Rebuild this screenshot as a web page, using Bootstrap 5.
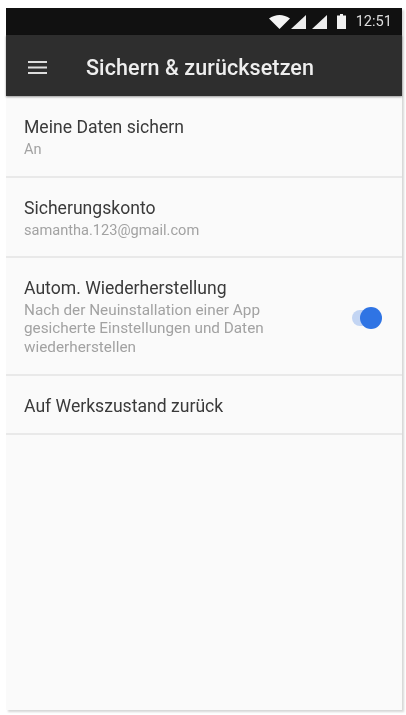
<!DOCTYPE html>
<html lang="de">
<head>
<meta charset="utf-8">
<title>Sichern &amp; zurücksetzen</title>
<link href="https://cdn.jsdelivr.net/npm/bootstrap@5.3.0/dist/css/bootstrap.min.css" rel="stylesheet">
<style>
html,body{height:715px;overflow:hidden;background:#fff;font-family:Roboto,"Liberation Sans",sans-serif}
.phone-screen{margin:8px 4px 0 6px;height:702px;background:#fafafa;box-shadow:2px 2px 2px rgba(0,0,0,.16);filter:blur(.7px)}
.status-strip{height:27px;background:#111;color:#ddd;font-size:14.6px;padding-right:10px}
.status-strip svg{flex:none}
.icon-wifi{margin-right:1px}
.icon-sig2{margin-left:6px}
.icon-batt{margin-left:10px}
.status-time{margin-left:10px}
.app-strip{height:61px;background:#2e2e2e;color:#eee;box-shadow:0 1px 2px rgba(0,0,0,.4);padding:4px 0 0 22px}
.app-title{font-size:21.5px;font-weight:500;margin:0 0 0 39px;letter-spacing:.1px}
.pref-list{--bs-list-group-bg:transparent;--bs-list-group-border-color:#e9e9e9}
.pref-row{padding:0 18px;display:flex;align-items:center;justify-content:space-between;color:#3a3a3a}
.pref-list.pref-list>.pref-row{border-width:0 0 2px;border-style:solid}
.row-a{height:82px;padding-top:3px}
.row-b{height:80px;padding-top:3px}
.row-c{height:118px;padding-top:1px}
.row-d{height:59px;padding-top:3px}
.pref-title{font-size:17.6px;line-height:22px}
.pref-sub{font-size:14.6px;line-height:19px;color:#a2a2a2;margin-top:2px}
.pref-sub-wrap{font-size:15.300px;max-width:270px;line-height:18.500px;margin-top:2px}
.toggle-track{width:28px;height:16px;border-radius:8px;background:#c3d5f3;margin:2px 4px 0 0;flex:none}
.toggle-knob{width:22px;height:22px;border-radius:50%;background:#2f74e4;right:-2px;top:-3px}
</style>
</head>
<body>
<div class="phone-screen d-flex flex-column">
  <div class="status-strip d-flex align-items-center justify-content-end">
    <svg class="icon-wifi" width="21" height="14" viewBox="0 0 21 14" aria-hidden="true"><path d="M0 3.500C3 1.200 7 0 10.500 0S18 1.200 21 3.500L10.500 14z" fill="#f4f4f4"/></svg>
    <svg width="15" height="14" viewBox="0 0 15 14" aria-hidden="true"><path d="M0 14L15 0v14z" fill="#eee"/></svg>
    <svg class="icon-sig2" width="15" height="14" viewBox="0 0 15 14" aria-hidden="true"><path d="M0 14L15 0v14z" fill="#eee"/></svg>
    <svg class="icon-batt" width="9" height="15" viewBox="0 0 9 15" aria-hidden="true"><path d="M3 0h3v1.500h3V15H0V1.500h3z" fill="#f2f2f2"/></svg>
    <span class="status-time">12:51</span>
  </div>
  <nav class="app-strip d-flex align-items-center">
    <svg width="19" height="13" viewBox="0 0 19 13" aria-hidden="true"><path d="M0 0h19v2H0zM0 5.500h19v2H0zM0 11h19v2H0z" fill="#ddd"/></svg>
    <h1 class="app-title">Sichern &amp; zurücksetzen</h1>
  </nav>
  <div class="list-group list-group-flush pref-list">
    <div class="list-group-item pref-row row-a">
      <div><div class="pref-title">Meine Daten sichern</div><div class="pref-sub">An</div></div>
    </div>
    <div class="list-group-item pref-row row-b">
      <div><div class="pref-title">Sicherungskonto</div><div class="pref-sub">samantha.123@gmail.com</div></div>
    </div>
    <div class="list-group-item pref-row row-c">
      <div><div class="pref-title">Autom. Wiederherstellung</div><div class="pref-sub pref-sub-wrap">Nach der Neuinstallation einer App gesicherte Einstellungen und Daten wiederherstellen</div></div>
      <div class="toggle-track position-relative"><div class="toggle-knob position-absolute"></div></div>
    </div>
    <div class="list-group-item pref-row row-d">
      <div class="pref-title">Auf Werkszustand zurück</div>
    </div>
  </div>
</div>
<script src="https://cdn.jsdelivr.net/npm/bootstrap@5.3.0/dist/js/bootstrap.bundle.min.js"></script>
</body>
</html>
